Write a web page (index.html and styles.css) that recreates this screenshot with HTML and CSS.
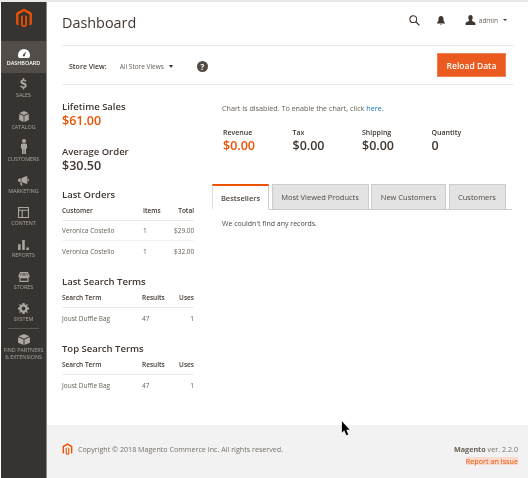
FILE: index.html
```html
<!DOCTYPE html>
<html lang="en">
<head>
<meta charset="utf-8">
<title>Dashboard</title>
<link rel="stylesheet" href="styles.css">
</head>
<body>
<div class="app">
  <nav class="side">
    <div class="logo">
      <svg width="18" height="21" viewBox="0 0 16 20"><path class="lg" d="M8 0.5 15.500 4.800V15.400L13.300 16.700V6.100L8 3 2.700 6.100V16.700L.5 15.400V4.800ZM6.900 6.800 5.200 7.800V16.800L8 18.400 10.800 16.800V7.800L9.100 6.800V16.100L8 16.700 6.900 16.100Z"/></svg>
    </div>
    <a class="item active">
      <svg width="12" height="9" viewBox="0 0 14 10.500"><path class="ic act" fill-rule="evenodd" d="M7 0A7 7 0 0 0 0 7C0 8.400.4 9.600 1.100 10.500H12.900C13.600 9.600 14 8.400 14 7A7 7 0 0 0 7 0ZM9.800 2.500 8.100 6.900A1.300 1.300 0 1 1 6.300 6.200Z"/></svg>
      <span>DASHBOARD</span>
    </a>
    <a class="item">
      <svg width="7" height="12" viewBox="0 0 10 17"><path class="ic" d="M4 0H6V2C7.500 2.200 8.500 2.800 9.300 3.500L8 5.300C7.200 4.600 6.100 4.100 5 4.100 3.900 4.100 3.400 4.500 3.400 5.100 3.400 6.900 9.600 6.100 9.600 10.700 9.600 12.600 8.300 13.900 6 14.200V16.500H4V14.200C2.500 14 1.200 13.300.3 12.400L1.600 10.600C2.500 11.400 3.700 12.100 5 12.100 6.200 12.100 6.900 11.600 6.900 10.900 6.900 9 .6 9.700 .6 5.300.6 3.600 1.900 2.300 4 2Z"/></svg>
      <span>SALES</span>
    </a>
    <a class="item">
      <svg width="10" height="11" viewBox="0 0 14 16"><path class="ic" d="M7 0 13.500 3 7 6 .5 3ZM0 4.200 6.400 7.200V16L0 13ZM14 4.200V13L7.600 16V7.200Z"/></svg>
      <span>CATALOG</span>
    </a>
    <a class="item">
      <svg width="6" height="15" viewBox="0 0 6 15"><circle class="ic" cx="3" cy="2" r="2"/><path class="ic" d="M1 4.500H5L6 5.500V9.500H5V15H3.300V10.500H2.700V15H1V9.500H0V5.500Z"/></svg>
      <span>CUSTOMERS</span>
    </a>
    <a class="item">
      <svg width="11" height="10" viewBox="0 0 16 14"><path class="ic" d="M11.500 0H13.500V11H11.500L5 8.500V3ZM4 3.200V8.400H1.800L0 7V4.500L1.800 3.200ZM14.300 3.500C15.300 3.800 16 4.600 16 5.700 16 6.800 15.300 7.500 14.300 7.800ZM3 9.200H5.500L6.500 13.500H4.200Z"/></svg>
      <span>MARKETING</span>
    </a>
    <a class="item">
      <svg width="11" height="11" viewBox="0 0 12 12"><path class="ic" fill-rule="evenodd" d="M0 0H12V12H0ZM1.200 1.200V3H10.800V1.200ZM1.200 4.200V10.800H4V4.200ZM5.200 4.200V10.800H10.800V4.200Z"/></svg>
      <span>CONTENT</span>
    </a>
    <a class="item">
      <svg width="11" height="10" viewBox="0 0 13 12"><path class="ic" d="M0 5H3V12H0ZM5 0H8V12H5ZM10 9H13V12H10Z"/></svg>
      <span>REPORTS</span>
    </a>
    <a class="item">
      <svg width="12" height="10" viewBox="0 0 15 13"><path class="ic" fill-rule="evenodd" d="M2.500 0H12.500L15 5.500C15 6.500 14 7 13.500 7V13H1.500V7C1 7 0 6.500 0 5.500ZM3 8V11.500H12V8ZM3.600 1.200 2.500 5H3.600L4.400 1.200ZM6 1.200 5.600 5H6.800L6.900 1.200ZM8.100 1.200 8.200 5H9.400L9 1.200ZM10.600 1.200 11.400 5H12.500L11.400 1.200Z"/></svg>
      <span>STORES</span>
    </a>
    <a class="item">
      <svg width="11" height="11" viewBox="0 0 14 14"><path class="ic" fill-rule="evenodd" d="M5.700 0H8.300L8.700 1.900 10.100 2.500 11.800 1.400 12.600 2.200 11.500 3.900 12.100 5.300 14 5.700V8.300L12.100 8.700 11.500 10.100 12.600 11.800 11.800 12.600 10.100 11.500 8.700 12.100 8.300 14H5.700L5.300 12.100 3.900 11.500 2.200 12.600 1.400 11.800 2.500 10.100 1.900 8.700 0 8.300V5.700L1.900 5.300 2.500 3.900 1.400 2.200 2.200 1.400 3.900 2.500 5.300 1.900ZM7 4.600A2.400 2.400 0 1 0 7 9.400 2.400 2.400 0 0 0 7 4.600Z"/></svg>
      <span>SYSTEM</span>
    </a>
    <div class="rule"></div>
    <a class="item partners">
      <svg width="12" height="11" viewBox="0 0 14 13"><path class="ic" d="M7 0 13.500 2.800 7 5.600 .5 2.800ZM0 3.800 6.400 6.600V13L0 10.300ZM14 3.800V10.300L7.600 13V6.600Z"/></svg>
      <span>FIND PARTNERS<br>&amp; EXTENSIONS</span>
    </a>
  </nav>
  <div class="main">
    <div class="wrap">
      <header class="head">
        <h1>Dashboard</h1>
        <div class="tools">
          <svg class="t-search" width="11" height="11" viewBox="0 0 13 13"><circle class="st" cx="5" cy="5" r="4"/><path class="st thick" d="M8 8 12.300 12.300"/></svg>
          <svg class="t-bell" width="8" height="9" viewBox="0 0 9 10"><path class="dk" d="M4.500 0C6.500 0 7.300 1.500 7.300 3.500 7.300 5.500 8 6.500 9 7.500V8.300H0V7.500C1 6.500 1.700 5.500 1.700 3.500 1.700 1.500 2.500 0 4.500 0ZM3.500 8.800H5.500L4.500 10Z"/></svg>
          <svg class="t-user" width="11" height="10" viewBox="0 0 11 11"><path class="dk" d="M5.500 0C7.200 0 7.900 1.200 7.900 3 7.900 4.300 7.300 5.400 6.800 6 7.600 7 11 7.500 11 9.600V11H0V9.600C0 7.500 3.400 7 4.200 6 3.700 5.400 3.100 4.300 3.100 3 3.100 1.200 3.800 0 5.500 0Z"/></svg>
          <span class="admin">admin</span>
          <i class="caret small"></i>
        </div>
      </header>
      <div class="storebar">
        <div class="store">
          <b>Store View:</b>
          <span class="sv">All Store Views</span>
          <i class="caret"></i>
          <span class="help">?</span>
        </div>
        <button class="reload">Reload Data</button>
      </div>
      <div class="cols">
        <aside class="left">
          <h2>Lifetime Sales</h2>
          <div class="big orange">$61.00</div>
          <h2 class="avg">Average Order</h2>
          <div class="big">$30.50</div>
          <h2 class="s1">Last Orders</h2>
          <table>
            <thead><tr><th class="a1">Customer</th><th class="a2">Items</th><th class="a3 r">Total</th></tr></thead>
            <tbody>
              <tr><td>Veronica Costello</td><td>1</td><td class="r">$29.00</td></tr>
              <tr><td>Veronica Costello</td><td>1</td><td class="r">$32.00</td></tr>
            </tbody>
          </table>
          <h2 class="s2">Last Search Terms</h2>
          <table>
            <thead><tr><th class="b1">Search Term</th><th class="b2">Results</th><th class="b3 r">Uses</th></tr></thead>
            <tbody><tr><td>Joust Duffle Bag</td><td>47</td><td class="r">1</td></tr></tbody>
          </table>
          <h2 class="s3">Top Search Terms</h2>
          <table>
            <thead><tr><th class="b1">Search Term</th><th class="b2">Results</th><th class="b3 r">Uses</th></tr></thead>
            <tbody><tr><td>Joust Duffle Bag</td><td>47</td><td class="r">1</td></tr></tbody>
          </table>
        </aside>
        <section class="right">
          <p class="chart">Chart is disabled. To enable the chart, click <a>here</a>.</p>
          <div class="stats">
            <div class="stat"><b>Revenue</b><div class="big orange">$0.00</div></div>
            <div class="stat"><b>Tax</b><div class="big">$0.00</div></div>
            <div class="stat"><b>Shipping</b><div class="big">$0.00</div></div>
            <div class="stat"><b>Quantity</b><div class="big">0</div></div>
          </div>
          <div class="tabs">
            <div class="tab on">Bestsellers</div>
            <div class="tab w1">Most Viewed Products</div>
            <div class="tab w2">New Customers</div>
            <div class="tab w3">Customers</div>
          </div>
          <p class="none">We couldn't find any records.</p>
        </section>
      </div>
    </div>
    <footer class="foot">
      <div class="copy">
        <svg width="11" height="13" viewBox="0 0 16 20"><path class="lg" d="M8 0.5 15.500 4.800V15.400L13.300 16.700V6.100L8 3 2.700 6.100V16.700L.5 15.400V4.800ZM6.900 6.800 5.200 7.800V16.800L8 18.400 10.800 16.800V7.800L9.100 6.800V16.100L8 16.700 6.900 16.100Z"/></svg>
        <span>Copyright © 2018 Magento Commerce Inc. All rights reserved.</span>
      </div>
      <div class="ver">
        <div><b>Magento</b> ver. 2.2.0</div>
        <a class="issue">Report an Issue</a>
      </div>
    </footer>
    <svg class="cursor" width="10" height="16" viewBox="0 0 11 17"><path d="M1 0V12.500L3.600 10 5.800 15.500 8 14.500 5.800 9.300H9.500Z"/></svg>
  </div>
</div>
</body>
</html>
```
FILE: styles.css
```css
* { box-sizing: border-box; }
html, body { margin: 0; height: 100%; }
body { font-family: "Open Sans", sans-serif; color: #41362f; background: #fff; overflow: hidden; }
.app { display: flex; height: 478px; padding-left: 1px; border-top: 2px solid #e9e9e9; background: #fff; position: relative; filter: blur(0.3px); }
.side { width: 46px; flex: none; background: #373330; border-right: 1px solid #8a8a8a; display: flex; flex-direction: column; align-items: stretch; }
.logo { height: 39px; display: flex; justify-content: center; padding-top: 6px; }
.lg { fill: #eb5202; }
.item { height: 32px; flex: none; display: flex; flex-direction: column; align-items: center; justify-content: flex-end; gap: 2px; padding-bottom: 7px; color: #aaa6a0; font-size: 5.400px; line-height: 6px; text-align: center; white-space: nowrap; }
.item.active { background: #524d49; color: #fff; font-weight: 600; }
.ic { fill: #aaa6a0; }
.ic.act { fill: #fff; }
.rule { height: 1px; background: #5a5652; margin: -1px 7px 0; flex: none; }
.partners { height: 36px; padding-bottom: 0; justify-content: flex-start; padding-top: 5px; gap: 2px; line-height: 7px; }
.main { flex: 1; min-width: 0; display: flex; flex-direction: column; position: relative; }
.wrap { flex: 1; padding: 0 14px 0 15px; }
.head { height: 44px; border-bottom: 1px solid #e9e9e9; display: flex; justify-content: space-between; align-items: center; padding-bottom: 1px; }
h1 { margin: 0; font-size: 14.400px; font-weight: 400; color: #41362f; line-height: 20px; }
.tools { display: flex; align-items: center; padding: 0 7px 6px 0; }
.t-search { margin-right: 17px; }
.t-bell { margin-right: 20px; }
.t-user { margin-right: 3px; }
.st { fill: none; stroke: #41362f; stroke-width: 1.200; }
.thick { stroke-width: 1.500; }
.dk { fill: #41362f; }
.admin { font-size: 6.500px; color: #676056; margin-right: 5px; }
.caret { display: inline-block; width: 0; height: 0; border-left: 2.500px solid transparent; border-right: 2.500px solid transparent; border-top: 3px solid #41362f; }
.caret.small { border-left-width: 2px; border-right-width: 2px; border-top-width: 2px; }
.storebar { height: 39px; border-bottom: 1px solid #e9e9e9; display: flex; align-items: center; justify-content: space-between; padding: 0 8px 0 7px; }
.store { display: flex; align-items: center; font-size: 6.500px; padding-top: 2px; }
.store b { font-size: 7px; font-weight: 600; margin-right: 13px; }
.sv { color: #676056; margin-right: 5px; }
.help { width: 11px; height: 11px; border-radius: 50%; background: #514943; color: #fff; font-size: 8px; font-weight: 700; line-height: 11px; text-align: center; margin-left: 24px; }
.reload { width: 69px; height: 24px; background: #eb5a1f; border: 1px solid #f08050; color: #fff; font: 600 8.500px "Open Sans", sans-serif; padding: 0; }
.cols { display: flex; }
.left { width: 132px; flex: none; padding-top: 15px; }
.right { margin-left: 18px; flex: 1; min-width: 0; }
h2 { margin: 0; font-size: 9.500px; font-weight: 600; line-height: 13px; color: #41362f; }
.big { font-size: 12.500px; font-weight: 600; line-height: 16px; color: #41362f; }
.orange { color: #eb5202; }
.avg { margin-top: 16px; }
.s1 { margin-top: 14px; }
.s2 { margin-top: 14px; }
.s3 { margin-top: 14px; }
table { width: 132px; border-collapse: separate; border-spacing: 0; table-layout: fixed; font-size: 6.500px; margin-top: 2px; }
th { font-weight: 600; text-align: left; height: 18px; padding: 0 0 3px; border-bottom: 1px solid #e9e9e9; white-space: nowrap; }
td { height: 20px; padding: 0; color: #676056; border-bottom: 1px solid #f2f2f2; white-space: nowrap; }
tbody tr:last-child td { border-bottom: 0; }
.a1 { width: 81px; }
.a2 { width: 31px; }
.a3 { width: 20px; }
.b1 { width: 80px; }
.b2 { width: 36px; }
.b3 { width: 16px; }
th.r, td.r { text-align: right; }
.chart { margin: 18px 0 0 10px; font-size: 7.200px; line-height: 11px; color: #676056; }
.chart a { color: #1979c3; }
.stats { display: flex; margin: 14px 0 0 11px; }
.stat { width: 69.500px; }
.stat b { display: block; font-size: 7px; font-weight: 600; line-height: 10px; color: #41362f; }
.tabs { display: flex; gap: 2.500px; margin-top: 30px; border-bottom: 1px solid #ccc; width: 300px; height: 26px; }
.tab { font-size: 7.500px; color: #514943; background: #e3e3e3; border: 1px solid #ccc; height: 26px; display: flex; align-items: center; justify-content: center; }
.tab.on { width: 57px; background: #fff; border: 0; border-top: 2px solid #eb5202; border-left: 1px solid #ddd; border-right: 1px solid #ccc; font-weight: 600; border-bottom: 1px solid #fff; }
.w1 { width: 97px; }
.w2 { width: 75px; }
.w3 { width: 57px; }
.none { margin: 9px 0 0 10px; font-size: 7px; line-height: 10px; color: #514943; }
.foot { height: 53px; background: #f2f2f2; display: flex; justify-content: space-between; padding: 18px 10px 0 15px; flex: none; }
.copy { display: flex; align-items: flex-start; gap: 5px; font-size: 7.150px; line-height: 13px; color: #776f68; }
.ver { text-align: right; font-size: 7.200px; line-height: 12px; color: #776f68; }
.ver b { font-weight: 700; color: #676056; }
.issue { color: #eb5202; background: #f9dccf; display: inline-block; line-height: 8px; margin-top: 2px; }
.cursor { position: absolute; left: 294px; top: 419px; }
```
